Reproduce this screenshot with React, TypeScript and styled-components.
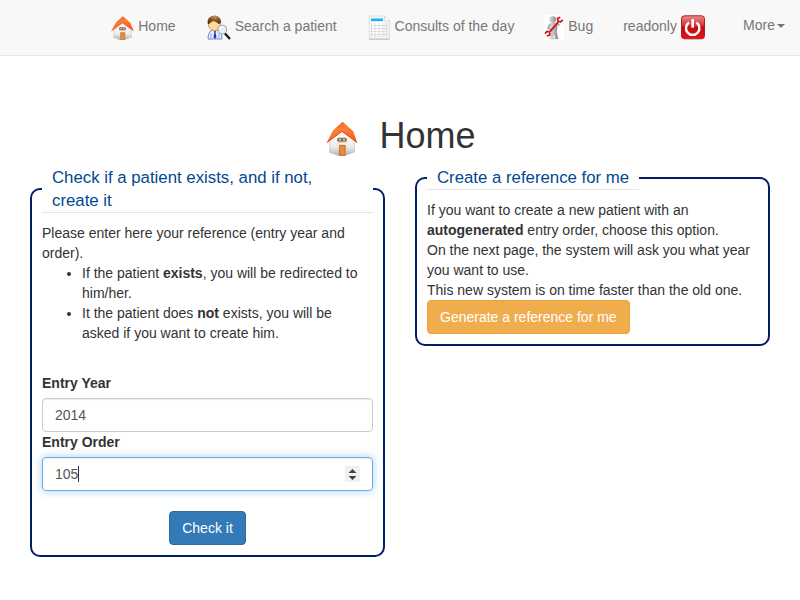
import React from "react";
import styled, { createGlobalStyle } from "styled-components";

const GlobalStyle = createGlobalStyle`
  * { box-sizing: border-box; }
  body {
    margin: 0;
    background: #fff;
    color: #333;
    font: 14px/20px "Liberation Sans", Arial, sans-serif;
  }
`;

const Navbar = styled.nav`
  display: flex;
  justify-content: flex-end;
  height: 56px;
  background: #f8f8f8;
  border-bottom: 1px solid #e7e7e7;
`;

const NavLink = styled.a<{ $gapBefore?: number }>`
  display: flex;
  align-items: flex-start;
  gap: 3.9px;
  margin-left: ${(p) => p.$gapBefore ?? 0}px;
  padding: 15px 15px 0;
  color: #777;
  white-space: nowrap;
  text-decoration: none;
`;

const NavText = styled.span<{ $top?: number }>`
  padding-top: ${(p) => p.$top ?? 1}px;
`;

const Caret = styled.span`
  margin: 9px 0 0 -1.9px;
  border-top: 4px solid #777;
  border-left: 4px solid transparent;
  border-right: 4px solid transparent;
`;

const Title = styled.h1`
  display: flex;
  justify-content: center;
  gap: 21px;
  margin: 60px 0 0 2px;
  height: 49.9px;
  font-size: 36px;
  font-weight: 400;
  line-height: 40px;
  svg { margin-top: 4px; }
`;

const Columns = styled.main`
  display: grid;
  grid-template-columns: 355px 355px;
  align-items: start;
  gap: 30px;
  padding: 0 30px;
`;

const Panel = styled.fieldset`
  min-width: 0;
  margin: 0;
  padding: 10px;
  border: 2px solid #001f66;
  border-radius: 10px;
`;

const Legend = styled.legend`
  padding: 0 10px;
  border-bottom: 1px solid #e5e5e5;
  color: #004990;
  font-size: 16.8px;
  line-height: 23px;
`;

const Text = styled.p`
  margin: 0;
`;

const List = styled.ul`
  margin: 0 0 30px;
  padding-left: 40px;
`;

const Label = styled.label`
  display: block;
  margin-bottom: 5px;
  font-weight: 700;
`;

const Field = styled.div<{ $focused?: boolean }>`
  display: flex;
  align-items: center;
  height: 34px;
  padding: 0 12px;
  border: 1px solid ${(p) => (p.$focused ? "#66afe9" : "#ccc")};
  border-radius: 4px;
  color: #555;
  box-shadow: inset 0 1px 1px rgba(0, 0, 0, 0.075)
    ${(p) => (p.$focused ? ", 0 0 8px rgba(102, 175, 233, 0.6)" : "")};
`;

const TextCursor = styled.span`
  width: 1px;
  height: 16px;
  background: #333;
`;

const Spinner = styled.svg`
  margin-left: auto;
`;

const Actions = styled.div`
  display: flex;
  justify-content: center;
  margin-top: 20px;
`;

const Button = styled.button<{ $tone: "primary" | "warning" }>`
  display: block;
  height: 34px;
  padding: 0 12px;
  border: 1px solid ${(p) => (p.$tone === "primary" ? "#2e6da4" : "#eea236")};
  border-radius: 4px;
  background: ${(p) => (p.$tone === "primary" ? "#337ab7" : "#f0ad4e")};
  color: #fff;
  font: inherit;
`;

function HouseIcon({ width, height }: { width: number; height: number }) {
  const id = `house${width}`;
  return (
    <svg width={width} height={height} viewBox="0 0 32 36" preserveAspectRatio="none">
      <defs>
        <linearGradient id={`${id}roof`} x1="0" y1="0" x2="0.3" y2="1">
          <stop offset="0" stopColor="#e8591c" />
          <stop offset="0.45" stopColor="#fa8136" />
          <stop offset="1" stopColor="#f8601d" />
        </linearGradient>
        <linearGradient id={`${id}wall`} x1="0" y1="0" x2="0" y2="1">
          <stop offset="0" stopColor="#fff" />
          <stop offset="0.65" stopColor="#eeedeb" />
          <stop offset="1" stopColor="#b5b5b5" />
        </linearGradient>
      </defs>
      <path d="M3.7 20 16 10 28.5 20.5V32L19 35.5H12L3.7 32.5Z" fill={`url(#${id}wall)`} stroke="#bbb" strokeWidth=".6" />
      <path d="M16.5 1.7 7 10.5.8 22.6 16 11.2l15.3 11.5L27 11Z" fill={`url(#${id}roof)`} />
      <path d="M.8 22.6 16 11.4l15.3 11.2" fill="none" stroke="#dc4520" strokeWidth="1" />
      <rect x="11.2" y="17.8" width="9.6" height="4" rx="1.6" fill="#8b6a55" />
      <path d="M13 18.8h2v1.8h-2zM17 18.8h2v1.8h-2z" fill="#dfc5ad" />
      <path d="M11.5 22.2h9" stroke="#f0bd94" strokeWidth=".8" />
      <path d="M13.4 25.3h5.8v10h-5.8z" fill="#ee8a32" stroke="#a45f2c" strokeWidth=".7" />
    </svg>
  );
}

function PatientIcon() {
  return (
    <svg width="24" height="25" viewBox="0 0 24 25">
      <defs>
        <radialGradient id="hair" cx=".55" cy=".15" r=".9">
          <stop offset="0" stopColor="#c19163" />
          <stop offset=".5" stopColor="#80501f" />
          <stop offset="1" stopColor="#4b260b" />
        </radialGradient>
      </defs>
      <path d="M1 24q0-7 4-9h6q4 2 4 9Z" fill="#e6ecff" stroke="#6578c9" strokeWidth=".9" />
      <path d="M4 18v6M12 18v6" stroke="#9eade6" />
      <path d="m6.8 15 1.2 1.5L9.2 15l-.6 3 .9 4L8 24l-1.5-2 .9-4Z" fill="#233b96" />
      <path d="M1.2 6q-1 9 6.3 9.7Q14 15 13.9 6L8 3Z" fill="#ffd89d" stroke="#cb873d" strokeWidth=".7" />
      <path d="M.7 8Q0 1 7.5.5 14 .5 14 8L11.5 9Q9 5.500 5 6.500L1.300 9.500Z" fill="url(#hair)" />
      <path d="m17.5 18 5.5 6" stroke="#171717" strokeWidth="2.3" />
      <circle cx="15.3" cy="14.6" r="4.4" fill="#e6f1f7" stroke="#a7a9ab" strokeWidth="1.1" />
      <path d="M12.6 14q1-3 4-2" stroke="#fff" strokeWidth="1.4" fill="none" />
    </svg>
  );
}

function SheetIcon() {
  return (
    <svg width="24" height="25" viewBox="0 0 24 25">
      <path d="M2.2 1h15.3l5 5v18H2.2Z" fill="#f4f4f4" stroke="#dadada" strokeWidth=".7" />
      <path d="M2 24.2h20.5" stroke="#b8b8b8" strokeWidth=".9" />
      <path d="M4 5h13v15.5H4z" fill="#fff" />
      <path d="M4 10.5h16M4 13.5h16M4 16.5h16M4 19.5h16M4.5 8v14M8 8v14M12 8v14M16 8v14M20 8v14" stroke="#ced2d5" strokeWidth=".7" />
      <path d="M4 3h12v3.2H4z" fill="#21b3ef" />
      <path d="M4 3h12v1H4z" fill="#70d6f8" />
      <path d="M17.5 1v5h5Z" fill="#fff" stroke="#ccc" strokeWidth=".6" />
    </svg>
  );
}

function RepairIcon() {
  return (
    <svg width="20" height="25" viewBox="0 0 20 25">
      <defs>
        <linearGradient id="figure">
          <stop offset="0" stopColor="#ddd" />
          <stop offset=".5" stopColor="#bbb" />
          <stop offset="1" stopColor="#808080" />
        </linearGradient>
      </defs>
      <path d="M0 0h20v25H0z" fill="#fff" />
      <ellipse cx="10" cy="23.8" rx="6" ry=".8" fill="#ddd" />
      <path d="m6 8-.5 5 1 4-.5 7h3.2l.6-5 1.6 5h2.8l-1.4-7 .7-6-1.5-3Z" fill="url(#figure)" />
      <path d="m6 9-2 4 3 1.5M11.5 9.5l3 .2-2-2" fill="none" stroke="#aaa" strokeWidth="1.7" />
      <circle cx="8.6" cy="4.6" r="3.4" fill="url(#figure)" />
      <path d="m6 16.6 8.2-9.4" stroke="#c9151b" strokeWidth="1.8" />
      <path d="M16.3 2.2 13.6 3.4l.3 2.8 2.4.8 2.6-2M5.8 17l-2.8-.6L1 18.6M6 17.5 5.6 20l-2.8 1" fill="none" stroke="#d5161d" strokeWidth="1.8" />
    </svg>
  );
}

function PowerIcon() {
  return (
    <svg width="24" height="25" viewBox="0 0 24 25">
      <defs>
        <linearGradient id="power" x1="0" y1="0" x2="0" y2="1">
          <stop offset="0" stopColor="#e48d8d" />
          <stop offset=".42" stopColor="#d93232" />
          <stop offset=".5" stopColor="#c60b10" />
          <stop offset="1" stopColor="#e51218" />
        </linearGradient>
      </defs>
      <rect x=".5" y=".8" width="23" height="23" rx="3" fill="url(#power)" stroke="#aa2226" />
      <path d="M8 7.6a6.7 6.7 0 1 0 7.4 0" fill="none" stroke="#fff" strokeWidth="2.4" />
      <path d="M11.7 4.2v8.5" stroke="#fff" strokeWidth="2.6" />
    </svg>
  );
}

export default function App() {
  return (
    <>
      <GlobalStyle />
      <Navbar>
        <NavLink>
          <HouseIcon width={23} height={25} />
          <NavText>Home</NavText>
        </NavLink>
        <NavLink $gapBefore={1.2}>
          <PatientIcon />
          <NavText>Search a patient</NavText>
        </NavLink>
        <NavLink>
          <SheetIcon />
          <NavText>Consults of the day</NavText>
        </NavLink>
        <NavLink>
          <RepairIcon />
          <NavText>Bug</NavText>
        </NavLink>
        <NavLink>
          <NavText>readonly</NavText>
          <PowerIcon />
        </NavLink>
        <NavLink $gapBefore={8.3}>
          <NavText $top={0}>More</NavText>
          <Caret />
        </NavLink>
      </Navbar>
      <Title>
        <HouseIcon width={32} height={36} />
        Home
      </Title>
      <Columns>
        <Panel>
          <Legend>Check if a patient exists, and if not, create it</Legend>
          <Text>Please enter here your reference (entry year and order).</Text>
          <List>
            <li>
              If the patient <b>exists</b>, you will be redirected to him/her.
            </li>
            <li>
              It the patient does <b>not</b> exists, you will be asked if you want to create him.
            </li>
          </List>
          <Label>Entry Year</Label>
          <Field>2014</Field>
          <Label>Entry Order</Label>
          <Field $focused>
            105
            <TextCursor />
            <Spinner width="15" height="16" viewBox="0 0 15 16">
              <path d="M0 0h15v16H0z" fill="#f0f0f0" />
              <path d="M3.5 7 7.5 3l4 4ZM3.5 10l4 4 4-4Z" fill="#444" />
            </Spinner>
          </Field>
          <Actions>
            <Button $tone="primary">Check it</Button>
          </Actions>
        </Panel>
        <Panel>
          <Legend>Create a reference for me</Legend>
          <Text>
            If you want to create a new patient with an <b>autogenerated</b> entry order, choose this option.
          </Text>
          <Text>On the next page, the system will ask you what year you want to use.</Text>
          <Text>This new system is on time faster than the old one.</Text>
          <Button $tone="warning">Generate a reference for me</Button>
        </Panel>
      </Columns>
    </>
  );
}
